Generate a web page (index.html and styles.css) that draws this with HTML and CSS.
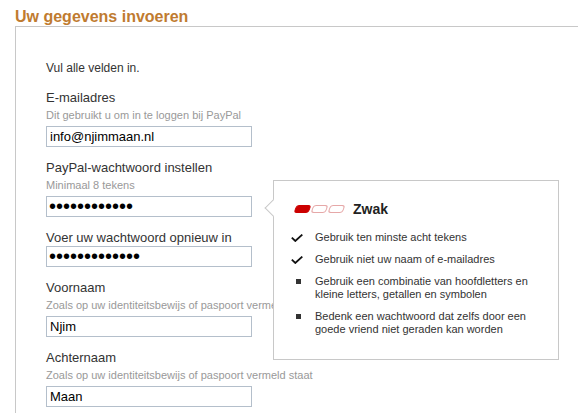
FILE: index.html
```html
<!DOCTYPE html>
<html lang="nl">
<head>
<meta charset="utf-8">
<title>Uw gegevens invoeren</title>
<link rel="stylesheet" href="styles.css">
</head>
<body>
<div class="page">
  <h1 class="title">Uw gegevens invoeren</h1>
  <section class="panel">
    <p class="intro">Vul alle velden in.</p>
    <div class="fields">
      <div class="field">
        <label class="label" for="email">E-mailadres</label>
        <div class="hint">Dit gebruikt u om in te loggen bij PayPal</div>
        <input class="input" id="email" type="text" value="info@njimmaan.nl">
      </div>
      <div class="field">
        <label class="label" for="pw">PayPal-wachtwoord instellen</label>
        <div class="hint">Minimaal 8 tekens</div>
        <input class="input input-pw" id="pw" type="password" value="abcdefghijkl">
      </div>
      <div class="field">
        <label class="label" for="pw2">Voer uw wachtwoord opnieuw in</label>
        <input class="input input-pw" id="pw2" type="password" value="abcdefghijklm">
      </div>
      <div class="field">
        <label class="label" for="first">Voornaam</label>
        <div class="hint">Zoals op uw identiteitsbewijs of paspoort vermeld staat</div>
        <input class="input" id="first" type="text" value="Njim">
      </div>
      <div class="field">
        <label class="label" for="last">Achternaam</label>
        <div class="hint">Zoals op uw identiteitsbewijs of paspoort vermeld staat</div>
        <input class="input" id="last" type="text" value="Maan">
      </div>
    </div>

    <div class="popover">
      <span class="popover-arrow"></span>
      <div class="strength">
        <span class="meter"><span class="seg on"></span><span class="seg"></span><span class="seg"></span></span>
        <span class="strength-label">Zwak</span>
      </div>
      <ul class="rules">
        <li class="rule">
          <span class="icon"><svg width="12" height="8" viewBox="0 0 12 8"><path d="M0.8 3.6 L4.3 7 L11.3 0.6" fill="none" stroke="#111" stroke-width="1.8"/></svg></span>
          <span class="rule-text">Gebruik ten minste acht tekens</span>
        </li>
        <li class="rule">
          <span class="icon"><svg width="12" height="8" viewBox="0 0 12 8"><path d="M0.8 3.6 L4.3 7 L11.3 0.6" fill="none" stroke="#111" stroke-width="1.8"/></svg></span>
          <span class="rule-text">Gebruik niet uw naam of e-mailadres</span>
        </li>
        <li class="rule">
          <span class="icon icon-bullet"><span class="square"></span></span>
          <span class="rule-text">Gebruik een combinatie van hoofdletters en kleine letters, getallen en symbolen</span>
        </li>
        <li class="rule">
          <span class="icon icon-bullet"><span class="square"></span></span>
          <span class="rule-text">Bedenk een wachtwoord dat zelfs door een goede vriend niet geraden kan worden</span>
        </li>
      </ul>
    </div>
  </section>
</div>
</body>
</html>
```

FILE: styles.css
```css
html, body {
  margin: 0;
  background: #fff;
}
body {
  font-family: "Liberation Sans", Arial, sans-serif;
  color: #333;
  overflow: hidden;
}
.page {
  padding-left: 15px;
}
.title {
  margin: 0;
  padding-top: 8px;
  font-size: 16px;
  line-height: 18px;
  font-weight: bold;
  color: #c07b30;
}
.panel {
  position: relative;
  box-sizing: border-box;
  width: 563px;
  height: 387px;
  border-top: 1px solid #c8c8c8;
  border-left: 1px solid #c8c8c8;
  padding: 34px 0 0 30px;
}
.intro {
  margin: 0;
  font-size: 12px;
  line-height: 14px;
  color: #333;
}
.fields {
  display: flex;
  flex-direction: column;
  gap: 13px;
  margin-top: 15px;
}
.field {
  display: flex;
  flex-direction: column;
  align-items: flex-start;
}
.label {
  font-size: 13px;
  line-height: 16px;
  color: #333;
}
.hint {
  margin: 2px 0 4px;
  font-size: 11px;
  line-height: 14px;
  color: #999;
}
.input {
  box-sizing: border-box;
  width: 206px;
  height: 21px;
  margin: 0;
  padding: 0 3px;
  border: 1px solid #b4bfcb;
  border-radius: 0;
  font-family: "Liberation Sans", Arial, sans-serif;
  font-size: 13px;
  color: #000;
  background: #fff;
  outline: none;
}
.input-pw {
  font-size: 20px;
  padding: 0 2px;
}
.popover {
  position: absolute;
  left: 257px;
  top: 153px;
  box-sizing: border-box;
  width: 286px;
  height: 180px;
  border: 1px solid #c8c8c8;
  background: #fff;
  padding: 20px 17px 0 16px;
}
.popover-arrow {
  position: absolute;
  left: -7px;
  top: 21px;
  box-sizing: border-box;
  width: 12px;
  height: 12px;
  background: #fff;
  border-left: 1px solid #c8c8c8;
  border-bottom: 1px solid #c8c8c8;
  transform: rotate(45deg);
}
.strength {
  display: flex;
  align-items: center;
  gap: 9px;
  margin-left: 5px;
  height: 16px;
}
.meter {
  display: flex;
  gap: 2px;
}
.seg {
  box-sizing: border-box;
  width: 15px;
  height: 8px;
  border: 1px solid #e6a8a8;
  border-radius: 3px;
  background: #fff;
  transform: skewX(-20deg);
}
.seg.on {
  background: #cc0000;
  border-color: #cc0000;
}
.strength-label {
  font-size: 14px;
  line-height: 16px;
  font-weight: bold;
  color: #222;
}
.rules {
  list-style: none;
  margin: 14px 0 0;
  padding: 0;
  display: flex;
  flex-direction: column;
  gap: 9px;
}
.rule {
  display: flex;
  gap: 12px;
  font-size: 11px;
  line-height: 13px;
  color: #333;
}
.icon {
  flex: none;
  width: 13px;
  height: 13px;
  display: flex;
  align-items: center;
  justify-content: center;
}
.icon-bullet {
  align-items: flex-start;
  justify-content: flex-start;
}
.square {
  width: 5px;
  height: 5px;
  margin: 4px 0 0 6px;
  background: #333;
}
```
